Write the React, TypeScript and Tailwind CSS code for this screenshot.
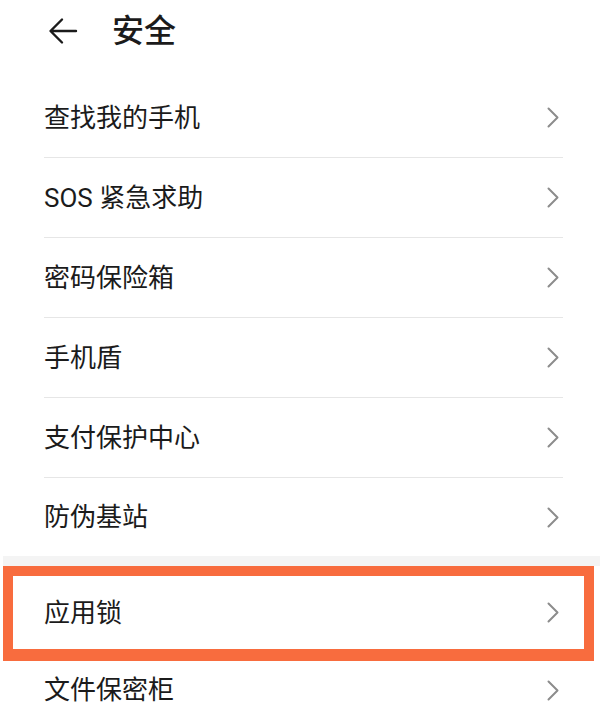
const font = { fontFamily: 'Roboto, "Noto Sans CJK SC", sans-serif' }

const items = ["查找我的手机", "SOS 紧急求助", "密码保险箱", "手机盾", "支付保护中心", "防伪基站"]

const Chevron = () => (
  <svg width="12" height="21" viewBox="0 0 12 21" fill="none" className="shrink-0">
    <path d="M1.5 1.5 L10.5 10.5 L1.5 19.5" stroke="#8c8c8c" strokeWidth="2" strokeLinecap="round" strokeLinejoin="round" />
  </svg>
)

const App = () => {
  return (
    <div className="w-[603px] h-[715px] overflow-hidden bg-white text-[#1b1b1b]" style={font}>
      <header className="h-[62px] flex items-center pl-[48px]">
        <svg width="30" height="30" viewBox="0 0 30 30" fill="none">
          <path d="M28 15 H3 M14 3.5 L2.5 15 L14 26.5" stroke="#1b1b1b" strokeWidth="2.4" strokeLinecap="round" strokeLinejoin="round" />
        </svg>
        <h1 className="ml-[34px] text-[32px] leading-none font-medium">安全</h1>
      </header>

      <div className="ml-[44px] mr-[40px] mt-[16px]">
        {items.map((label, i) => (
          <div
            key={label}
            className={
              i < items.length - 1
                ? "h-[80px] flex items-center justify-between border-b-[1.5px] border-[#e6e6e6] pr-[4px]"
                : "h-[78px] flex items-center justify-between pr-[4px]"
            }
          >
            <span className="text-[26px] leading-none">{label}</span>
            <Chevron />
          </div>
        ))}
      </div>

      <div className="mx-[3px] h-[10px] bg-[#f4f4f4]" />

      <div className="ml-[3px] w-[591px] border-[#f86c3e] border-x-[10px] border-t-[10px] border-b-[12px]">
        <div className="h-[73px] flex items-center justify-between pl-[31px] pr-[25px]">
          <span className="text-[26px] leading-none">应用锁</span>
          <Chevron />
        </div>
      </div>

      <div className="ml-[44px] mr-[40px] h-[58px] flex items-center justify-between pr-[4px]">
        <span className="text-[26px] leading-none">文件保密柜</span>
        <Chevron />
      </div>
    </div>
  )
}

export default App
